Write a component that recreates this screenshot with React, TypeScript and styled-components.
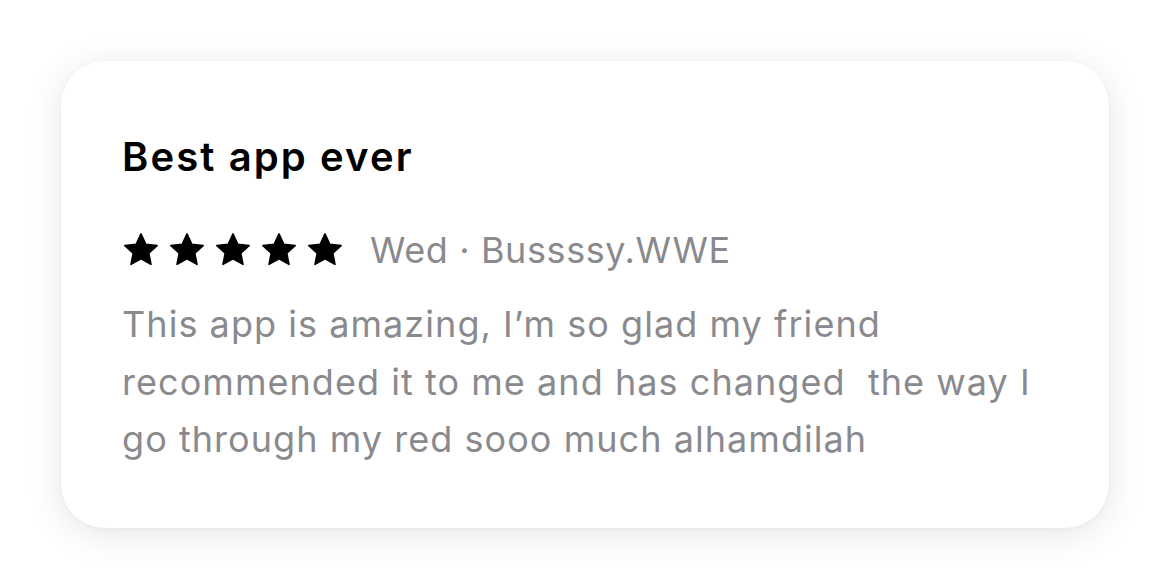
import React from 'react';
import styled, { createGlobalStyle } from 'styled-components';

const GlobalStyle = createGlobalStyle`
  html, body {
    margin: 0;
    padding: 0;
    background: #ffffff;
    font-family: 'Inter', 'Noto Sans', sans-serif;
  }
`;

const Page = styled.div`
  width: 1170px;
  height: 576px;
  box-sizing: border-box;
  padding: 61px 61px 48px;
`;

const Card = styled.div`
  box-sizing: border-box;
  width: 1048px;
  height: 467px;
  background: #ffffff;
  border-radius: 44px;
  box-shadow: 0 6px 36px rgba(0, 0, 0, 0.1), 0 1px 4px rgba(0, 0, 0, 0.04);
  display: flex;
  flex-direction: column;
  padding: 70px 61px 0;
`;

const Title = styled.h2`
  margin: 0;
  font-size: 40px;
  line-height: 52px;
  font-weight: 600;
  color: #000000;
  letter-spacing: 2.1px;
`;

const MetaRow = styled.div`
  display: flex;
  align-items: center;
  margin-top: 43px;
  height: 48px;
`;

const Stars = styled.div`
  display: flex;
  gap: 8px;
  margin-right: 26px;
`;

const Meta = styled.span`
  font-size: 36px;
  color: #8a8a8e;
  letter-spacing: 0.6px;
`;

const Body = styled.p`
  margin: 22px 0 0;
  font-size: 36px;
  line-height: 57.5px;
  color: #8a8a8e;
  letter-spacing: 1.05px;
  white-space: pre-wrap;
`;

const Star = () => (
  <svg width="38" height="36" viewBox="0 0 24 23">
    <path
      d="M12 1.2l3.1 6.6 7.2.9-5.3 4.9 1.4 7.1L12 17.2l-6.4 3.5L7 13.6 1.7 8.7l7.2-.9z"
      fill="#000"
      stroke="#000"
      strokeWidth="1"
      strokeLinejoin="round"
    />
  </svg>
);

export default function App() {
  return (
    <>
      <GlobalStyle />
      <Page>
        <Card>
          <Title>Best app ever</Title>
          <MetaRow>
            <Stars>
              {[0, 1, 2, 3, 4].map((i) => (
                <Star key={i} />
              ))}
            </Stars>
            <Meta>Wed · Bussssy.WWE</Meta>
          </MetaRow>
          <Body>
            {'This app is amazing, I\u2019m so glad my friend\nrecommended it to me and has changed  the way I\ngo through my red sooo much alhamdilah'}
          </Body>
        </Card>
      </Page>
    </>
  );
}
